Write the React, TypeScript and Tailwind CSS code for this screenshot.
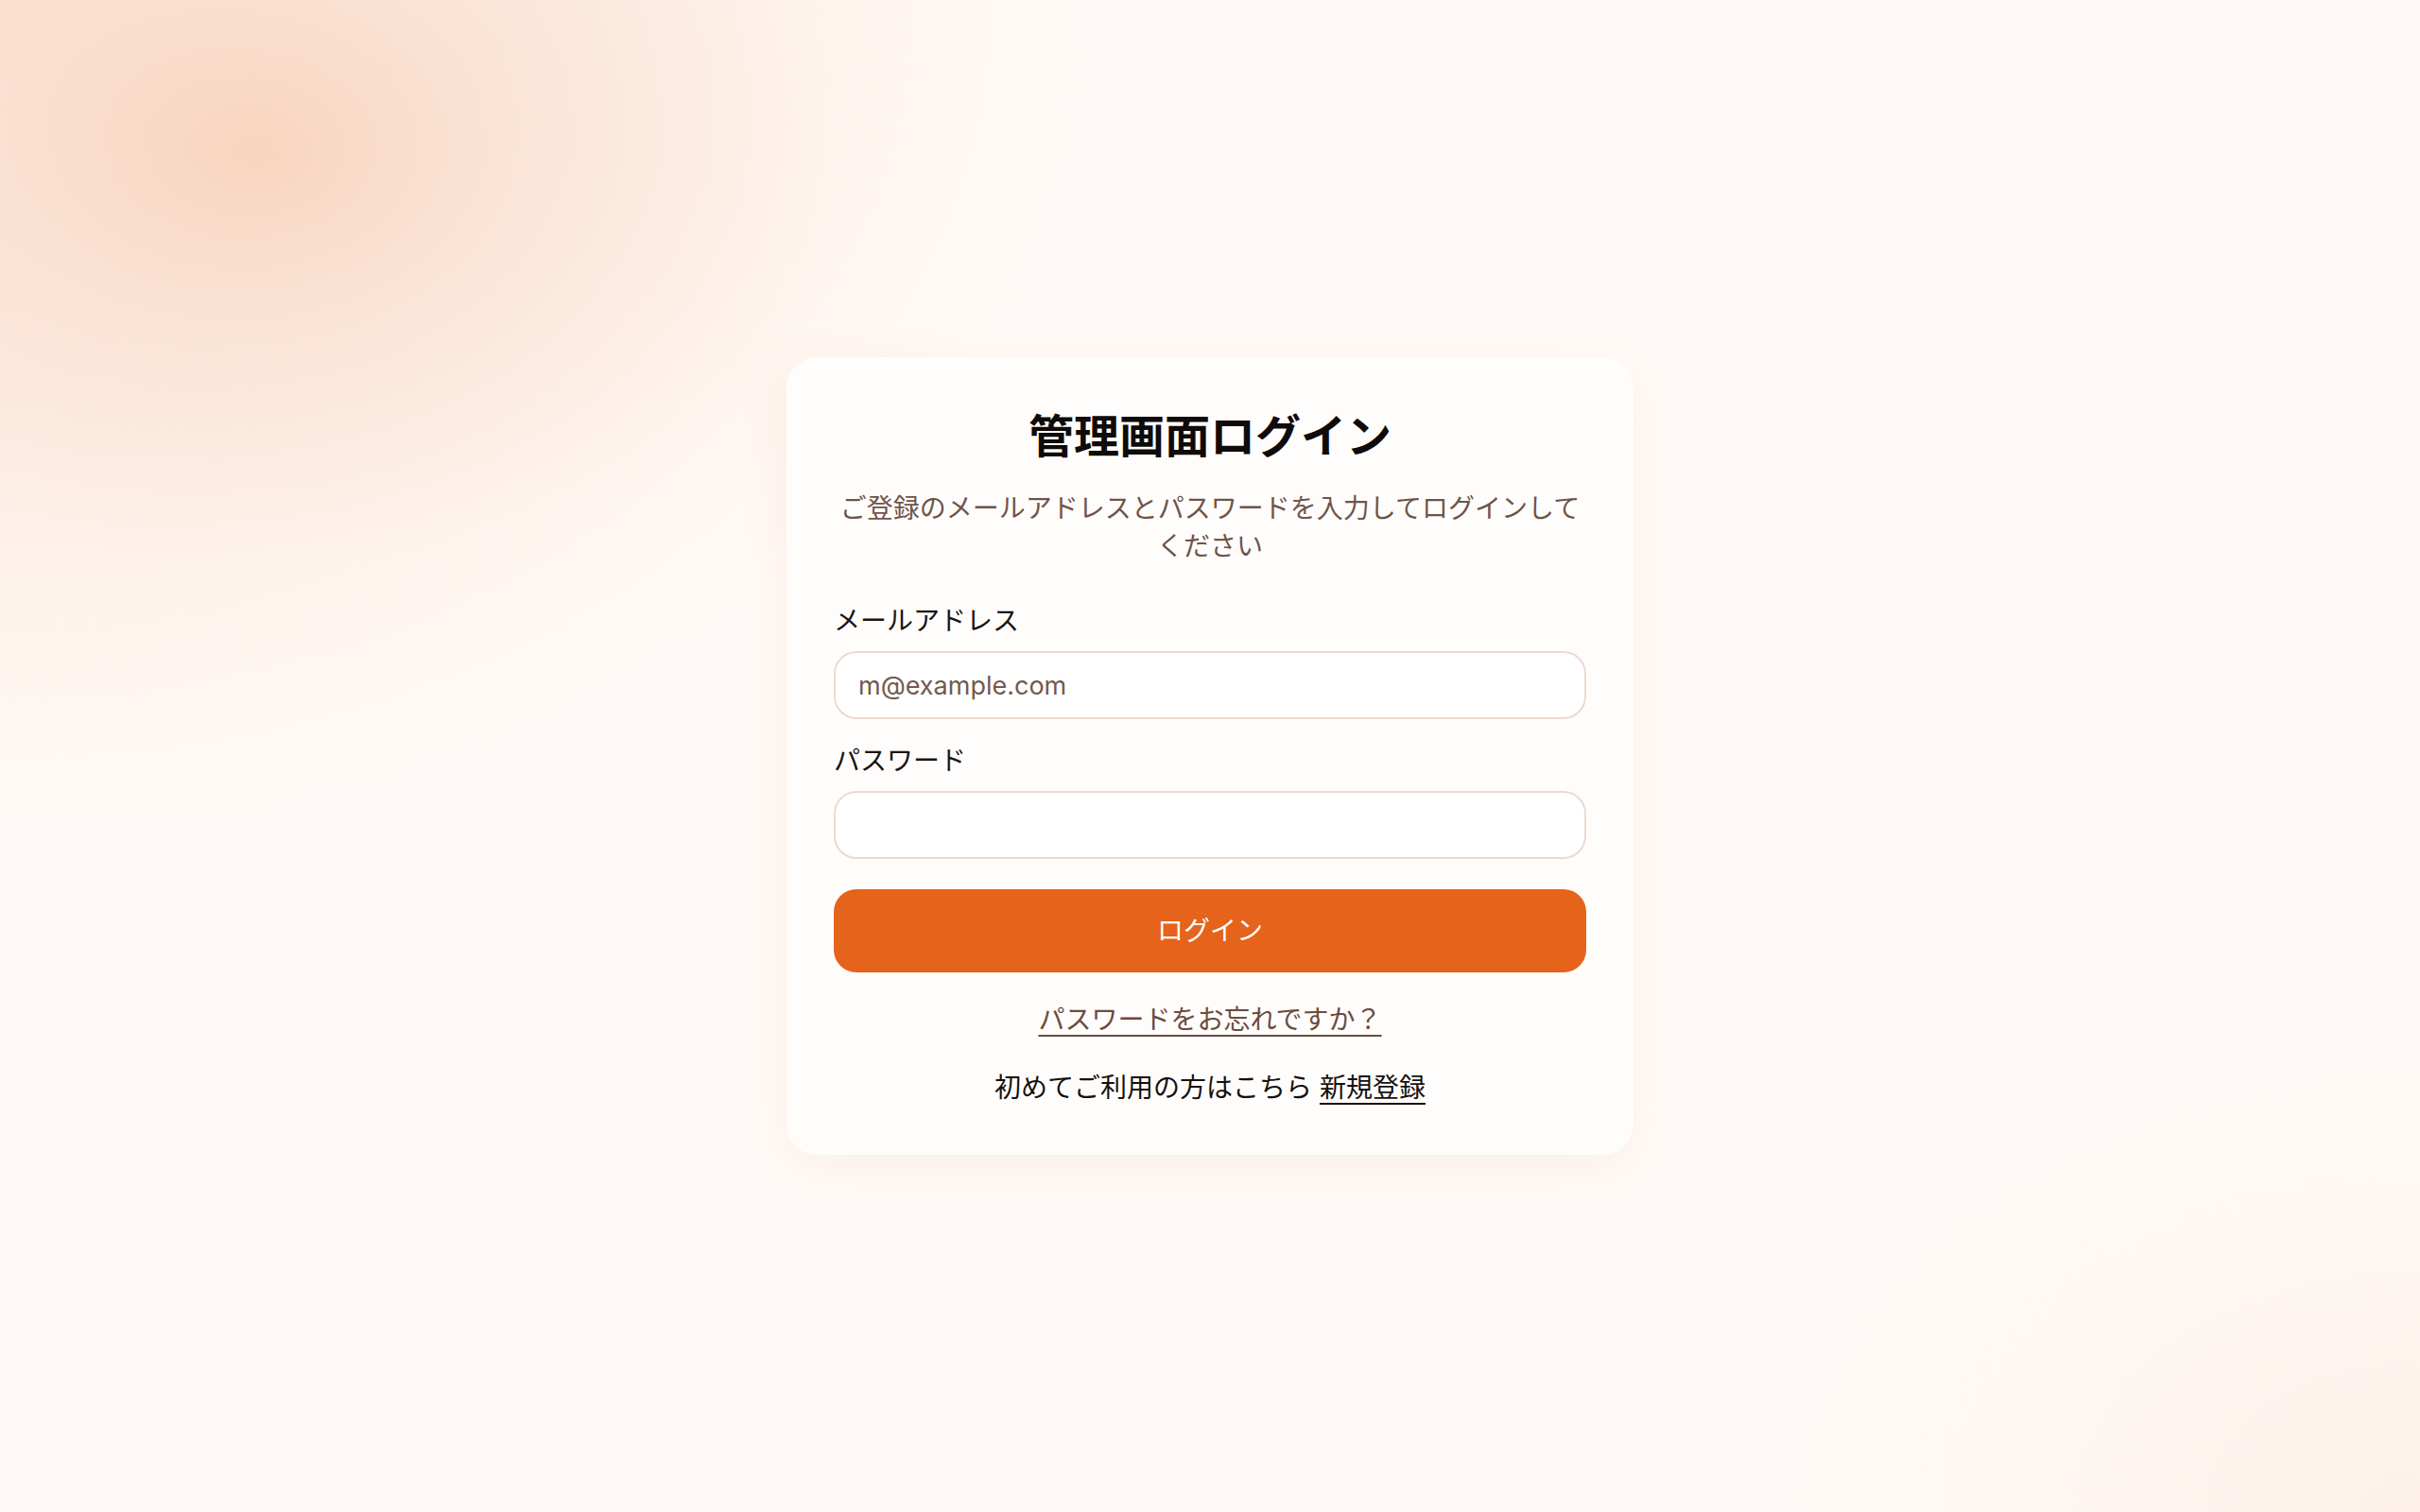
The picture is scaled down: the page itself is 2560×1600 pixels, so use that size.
import { useState } from 'react'

const FONT = "font-['Inter','Noto_Sans_CJK_JP',sans-serif]"

function Field({
  id, label, type, placeholder, value, onChange,
}: {
  id: string; label: string; type: string; placeholder?: string; value: string; onChange: (v: string) => void
}) {
  return (
    <div className="flex flex-col gap-[18px]">
      <label htmlFor={id} className="text-[28px] leading-[28px] text-[#1a1413]">{label}</label>
      <input
        id={id}
        type={type}
        value={value}
        placeholder={placeholder}
        onChange={(e) => onChange(e.target.value)}
        className="h-[72px] w-full rounded-[24px] border-2 border-[#ecdad0] bg-white px-[24px] text-[27px] text-[#3b2a24] placeholder:text-[#75584d] outline-none focus:border-[#e5631a]"
      />
    </div>
  )
}

export default function App() {
  const [email, setEmail] = useState('')
  const [password, setPassword] = useState('')

  return (
    <div
      className={`${FONT} min-h-screen w-full flex items-center justify-center bg-[#fffaf7] bg-[radial-gradient(ellipse_620px_440px_at_270px_160px,rgba(246,208,184,0.8)_0%,rgba(249,220,202,0.5)_45%,transparent_100%),radial-gradient(ellipse_1500px_1150px_at_0%_0%,#fbe2d3_0%,#fdeee5_40%,transparent_78%),radial-gradient(ellipse_1000px_700px_at_100%_100%,#fdf1ea_0%,transparent_70%)]`}
    >
      <div className="w-[896px] rounded-[32px] bg-[#fffdfb] px-[50px] pt-[52px] pb-[51px] shadow-[0_12px_48px_rgba(232,170,138,0.14)]">
        <h1 className="text-center text-[48px] leading-[64px] font-bold text-[#0f0b0a]">管理画面ログイン</h1>
        <p className="mt-[24px] text-center text-[28px] leading-[40px] text-[#6f5449]">
          ご登録のメールアドレスとパスワードを入力してログインしてください
        </p>

        <form className="mt-[45px] flex flex-col" onSubmit={(e) => e.preventDefault()}>
          <div className="flex flex-col gap-[30px]">
            <Field id="email" label="メールアドレス" type="email" placeholder="m@example.com" value={email} onChange={setEmail} />
            <Field id="password" label="パスワード" type="password" value={password} onChange={setPassword} />
          </div>

          <button
            type="submit"
            className="mt-[32px] h-[88px] w-full rounded-[24px] bg-[#e5631a] text-[28px] text-white hover:bg-[#d65a14]"
          >
            ログイン
          </button>

          <div className="mt-[30px] text-center text-[28px] leading-[40px]">
            <a href="#" className="text-[#6b4b3f] underline underline-offset-[6px]">パスワードをお忘れですか？</a>
          </div>

          <p className="mt-[32px] text-center text-[28px] leading-[40px] text-[#15100e]">
            初めてご利用の方はこちら{' '}
            <a href="#" className="underline underline-offset-[6px]">新規登録</a>
          </p>
        </form>
      </div>
    </div>
  )
}
